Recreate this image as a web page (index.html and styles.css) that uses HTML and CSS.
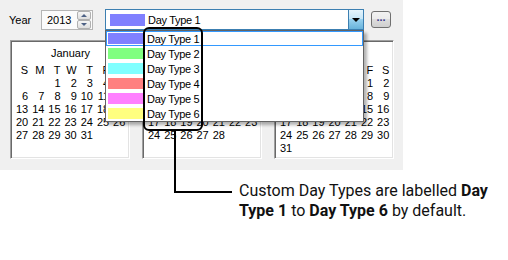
FILE: index.html
```html
<!DOCTYPE html>
<html lang="en">
<head>
    <meta charset="UTF-8">
    <title>Day Types</title>
    <link rel="stylesheet" href="styles.css">
</head>
<body>
    <div class="painel">
        <div class="barra">
            <span class="rotulo">Year</span>
            <div class="spin">
                <span class="spin-valor">2013</span>
                <div class="spin-botoes">
                    <span class="spin-botao"><i class="seta-cima"></i></span>
                    <span class="spin-botao"><i class="seta-baixo"></i></span>
                </div>
            </div>
            <div class="combo">
                <span class="amostra azul"></span>
                <span class="combo-texto">Day Type 1</span>
                <span class="combo-botao"><i class="seta-combo"></i></span>
            </div>
            <button class="mais">...</button>
        </div>
        <div class="calendarios">
            <div class="calendario" data-mes="0">
                <div class="mes">January</div>
                <div class="dias"></div>
            </div>
            <div class="calendario" data-mes="1">
                <div class="mes">February</div>
                <div class="dias"></div>
            </div>
            <div class="calendario" data-mes="2">
                <div class="mes">March</div>
                <div class="dias"></div>
            </div>
        </div>

        <ul class="lista">
            <li class="item selecionado"><span class="amostra azul"></span>Day Type 1</li>
            <li class="item"><span class="amostra verde"></span>Day Type 2</li>
            <li class="item"><span class="amostra ciano"></span>Day Type 3</li>
            <li class="item"><span class="amostra vermelho"></span>Day Type 4</li>
            <li class="item"><span class="amostra magenta"></span>Day Type 5</li>
            <li class="item"><span class="amostra amarelo"></span>Day Type 6</li>
        </ul>
        <div class="destaque"></div>
        <div class="linha-guia"></div>
    </div>
    <p class="legenda">Custom Day Types are labelled <b>Day Type 1</b> to <b>Day Type 6</b> by default.</p>

    <script>
        const semana = ["S", "M", "T", "W", "T", "F", "S"]

        for(const calendarioElement of document.querySelectorAll(".calendario")) {
            const mes = Number(calendarioElement.dataset.mes)
            const diasElement = calendarioElement.querySelector(".dias")
            semana.forEach(letra => diasElement.appendChild(criarCelula(letra)))

            const inicio = new Date(2013, mes, 1).getDay()
            const total = new Date(2013, mes + 1, 0).getDate()
            for(let i = 0; i < inicio; i++) {
                diasElement.appendChild(criarCelula(""))
            }
            for(let dia = 1; dia <= total; dia++) {
                diasElement.appendChild(criarCelula(dia))
            }
        }

        function criarCelula(texto) {
            const celulaElement = document.createElement("span")
            celulaElement.innerText = texto
            return celulaElement
        }
    </script>
</body>
</html>
```

FILE: styles.css
```css
* {
    box-sizing: border-box;
}
body {
    margin: 0;
    background: #fff;
    font-family: "Liberation Sans", Arial, sans-serif;
    font-size: 11px;
    color: #000;
}
.painel {
    position: relative;
    width: 403px;
    height: 170px;
    background: #f0f0f0;
}
.barra {
    display: flex;
    align-items: center;
    height: 30px;
    padding: 9px 0 0 9px;
}
.rotulo {
    width: 32px;
}
.spin {
    display: flex;
    align-items: center;
    width: 52px;
    height: 20px;
    padding: 0 1px 0 5px;
    border: 1px solid #b5b5b5;
    background: #fbfbfb;
}
.spin-valor {
    flex: 1;
}
.spin-botoes {
    display: flex;
    flex-direction: column;
    width: 14px;
    height: 18px;
}
.spin-botao {
    display: flex;
    justify-content: center;
    align-items: center;
    flex: 1;
    border: 1px solid #b0b0b0;
    border-radius: 2px;
    background: linear-gradient(#f6f6f6, #dedede);
}
.seta-cima, .seta-baixo {
    width: 0;
    height: 0;
    border-left: 3px solid transparent;
    border-right: 3px solid transparent;
}
.seta-cima {
    border-bottom: 3px solid #4d6185;
}
.seta-baixo {
    border-top: 3px solid #4d6185;
}
.combo {
    display: flex;
    align-items: center;
    width: 259px;
    height: 21px;
    margin-left: 12px;
    padding-left: 4px;
    border: 1px solid #3c7fb1;
    background: #fff;
}
.combo .amostra {
    height: 12px;
}
.combo-texto {
    margin-left: 3px;
    letter-spacing: -0.3px;
}
.combo-botao {
    display: flex;
    justify-content: center;
    align-items: center;
    width: 15px;
    height: 100%;
    margin-left: auto;
    border-left: 1px solid #3c7fb1;
    background: linear-gradient(#e5f4fc, #c4e5f6 50%, #98d1ef 50%, #68b3db);
}
.seta-combo {
    width: 0;
    height: 0;
    border-left: 4px solid transparent;
    border-right: 4px solid transparent;
    border-top: 4px solid #000;
}
.mais {
    width: 20px;
    height: 17px;
    margin-left: 7px;
    padding: 0 0 4px;
    border: 1px solid #707070;
    border-radius: 3px;
    background: linear-gradient(#f2f2f2, #ebebeb 50%, #dddddd 50%, #cfcfcf);
    font-family: "Liberation Sans", Arial, sans-serif;
    font-size: 11px;
    font-weight: bold;
    color: #3a3a8c;
    line-height: 1;
}
.calendarios {
    display: flex;
    gap: 12px;
    margin-top: 10px;
    padding-left: 10px;
}
.calendario {
    width: 120px;
    height: 119px;
    padding: 6px 0 0 1px;
    border: 1px solid;
    border-color: #a0a0a0 #fff #fff #a0a0a0;
    box-shadow: inset 1px 1px 0 #696969, inset -1px -1px 0 #e3e3e3;
    background: #fff;
}
.mes {
    height: 13px;
    margin-bottom: 4px;
    line-height: 13px;
    text-align: center;
}
.dias {
    display: grid;
    grid-template-columns: repeat(7, 16.2px);
    grid-auto-rows: 13px;
    line-height: 13px;
    text-align: right;
}
.lista {
    position: absolute;
    left: 105px;
    top: 30px;
    width: 259px;
    height: 92px;
    margin: 0;
    padding: 0;
    list-style: none;
    border: 1px solid #646464;
    background: #fff;
    box-shadow: 3px 3px 3px rgba(0, 0, 0, 0.3);
}
.item {
    display: flex;
    align-items: center;
    height: 15px;
    padding-left: 1px;
    border: 1px solid transparent;
    letter-spacing: -0.3px;
}
.item.selecionado {
    border-color: #3399ff;
}
.item .amostra {
    height: 11px;
    margin-right: 4px;
}
.amostra {
    width: 35px;
}
.azul { background: #8080ff; }
.verde { background: #80ff80; }
.ciano { background: #80ffff; }
.vermelho { background: #ff8080; }
.magenta { background: #ff80ff; }
.amarelo { background: #ffff80; }
.destaque {
    position: absolute;
    left: 143px;
    top: 27px;
    width: 60px;
    height: 104px;
    border: 2px solid #000;
    border-radius: 6px;
}
.linha-guia {
    position: absolute;
    left: 174px;
    top: 131px;
    width: 58px;
    height: 62px;
    border-left: 2px solid #000;
    border-bottom: 2px solid #000;
}
.legenda {
    width: 262px;
    margin: 11px 0 0 239px;
    font-family: Roboto, "Liberation Sans", sans-serif;
    font-size: 16px;
    line-height: 20px;
    color: #111;
}
```
